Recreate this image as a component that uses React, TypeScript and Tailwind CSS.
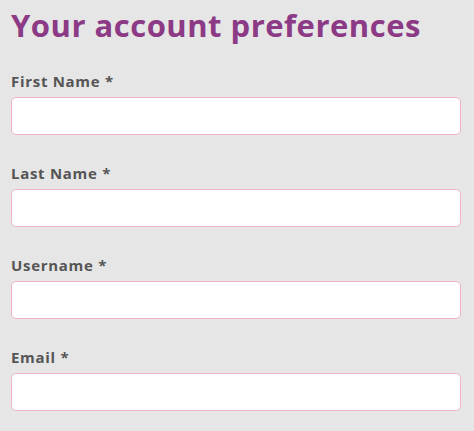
import React from "react";

const fields = ["First Name *", "Last Name *", "Username *", "Email *"];

export default function App() {
  return (
    <div className="min-h-[431px] w-full bg-[#e6e6e6] px-[11px] pt-[3px]" style={{ fontFamily: "'Open Sans', sans-serif" }}>
      <h1 className="text-[31px] leading-[44px] font-bold text-[#8c3a85] tracking-[0.5px]">Your account preferences</h1>
      <div className="mt-[25px] flex flex-col gap-[29px]">
        {fields.map((f) => (
          <div key={f} className="flex flex-col">
            <label className="text-[15px] leading-[18px] font-bold text-[#555555] tracking-[0.7px]">{f}</label>
            <input className="mt-[7px] h-[38px] w-[450px] rounded-[5px] border border-[#f0b3c8] bg-white outline-none" />
          </div>
        ))}
      </div>
    </div>
  );
}
